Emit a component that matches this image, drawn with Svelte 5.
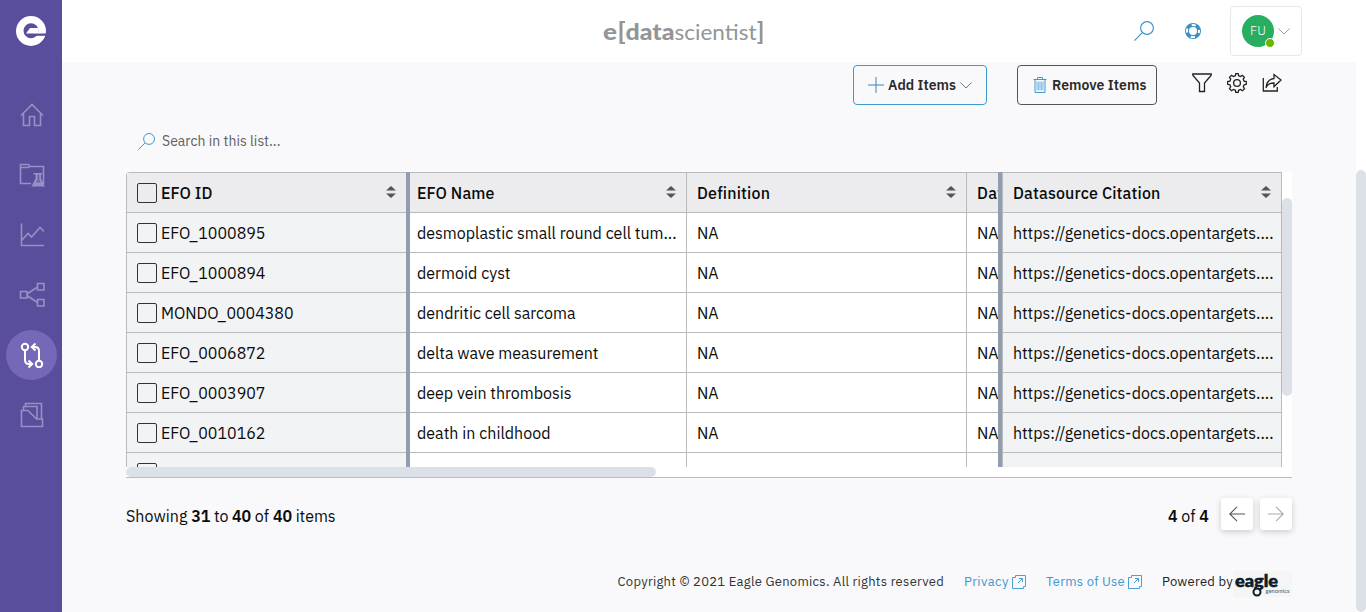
<script>
  const rows = [
    { id: 'EFO_1000895', idW: 104.5, name: 'desmoplastic small round cell tum...', nameW: 259.5 },
    { id: 'EFO_1000894', idW: 104.5, name: 'dermoid cyst', nameW: 93.5 },
    { id: 'MONDO_0004380', idW: 132.5, name: 'dendritic cell sarcoma', nameW: 158.5 },
    { id: 'EFO_0006872', idW: 104.5, name: 'delta wave measurement', nameW: 181.5 },
    { id: 'EFO_0003907', idW: 104.5, name: 'deep vein thrombosis', nameW: 154.5 },
    { id: 'EFO_0010162', idW: 104.5, name: 'death in childhood', nameW: 133.5 },
    { id: '', idW: 0, name: '', nameW: 0 }
  ];

  // Tracks a label out (or in) so that it occupies the given width.
  function fit(node, width) {
    if (!width) return;
    const natural = node.getBoundingClientRect().width;
    node.style.letterSpacing = (width - natural) / node.textContent.length + 'px';
  }
</script>

{#snippet magnifier(size)}
  <svg width={size} height={size} viewBox="0 0 20 20" fill="none" stroke="#3d94cb" stroke-width="1.15">
    <circle cx="13" cy="7" r="6.4" /><path d="M8.4 11.6 0.4 19.6" />
  </svg>
{/snippet}

{#snippet sorter()}
  <svg class="sorter" width="10" height="12" viewBox="0 0 10 12" fill="#555">
    <path d="M0 4.500 5 0l5 4.500zM0 7.500h10L5 12z" />
  </svg>
{/snippet}

{#snippet external()}
  <svg width="14" height="14" viewBox="0 0 14 14" fill="none" stroke="#4b9fd3" stroke-width="1">
    <path d="M3.500 2.500V.5h10v11h-2M3.500 2.500h-3v11h11v-2M6 8l4.500-4.500M7 3.500h3.500V7" />
  </svg>
{/snippet}

<div class="app">
  <nav>
    <div class="brand">
      <svg width="30" height="30" viewBox="0 0 30 30">
        <circle cx="15" cy="15" r="15" fill="#fff" />
        <circle cx="15" cy="14.800" r="7.500" fill="#594e9b" />
        <path d="M12 17.500h18v2.300H12z" fill="#594e9b" />
        <path d="M10 17.500 14 12h8.500v5.500z" fill="#fff" />
      </svg>
    </div>
    <div class="item">
      <svg width="26" height="26" viewBox="0 0 26 26"><path d="M2 13.500 13 2.500l11 11M4.500 11.500v12h6v-9h5v9h6v-12" /></svg>
    </div>
    <div class="item">
      <svg width="26" height="26" viewBox="0 0 26 26"><path d="M12 21.500H1.500v-19h8l1.500 2h13.500V22M1.500 5.500h8L11 4" /><path class="solid" d="M14.500 11h9v1.500H22v4l4 8H12.500l4-8v-4h-2z" /><path d="M19.200 13v4l-1.500 3h3.500l-1.500-3v-4z" stroke="#594e9b" stroke-width=".8" /></svg>
    </div>
    <div class="item">
      <svg width="26" height="26" viewBox="0 0 26 26"><path d="M2.500 1.500v22H25M3 18l6-6.500 3.500 3.500L21 5.500l4 4" /></svg>
    </div>
    <div class="item">
      <svg width="26" height="26" viewBox="0 0 26 26"><path d="M1.500 9.500h6.500v6.500H1.500zM18.500 1.500H25V8h-6.500zM18.500 17.500H25V24h-6.500zM8 12l10.500-7M8 13.500l10.500 7" /></svg>
    </div>
    <div class="item active">
      <svg width="26" height="26" viewBox="0 0 26 26"><circle cx="6" cy="5" r="3.200" /><circle cx="20" cy="22" r="3.200" /><path d="M6 8.200V18q0 4 4 4h3M9.500 18.500l3.700 3.500-3.700 3.500M20 18.800V9q0-4-4-4h-3M16.500 1.500 12.800 5l3.700 3.500" /></svg>
    </div>
    <div class="item">
      <svg width="26" height="26" viewBox="0 0 26 26"><path d="M2.500 24.500v-16h6.500l8.500 8.500h6v7.500zM4.500 8.500v-4h13.500V17M6.500 4.500v-3h16V17" /></svg>
    </div>
  </nav>

  <div class="page">
    <header>
      <svg class="wordmark" width="164" height="30" viewBox="0 0 164 30" fill="#939598">
        <text x="0" y="22.500" font-size="22" font-weight="900" textLength="14" lengthAdjust="spacingAndGlyphs">e</text>
        <path d="M16.500 4h5.500v2h-2.500v19H22v2h-5.500z" />
        <text x="22.500" y="22.500" font-size="22" font-weight="900" textLength="49" lengthAdjust="spacingAndGlyphs">data</text>
        <text x="71.500" y="22.500" font-size="22" font-weight="400" textLength="82" lengthAdjust="spacingAndGlyphs">scientist</text>
        <path d="M159.500 4h-5v2h2.300v19h-2.300v2h5z" />
      </svg>
      <div class="tools">
        {@render magnifier(20)}
        <svg class="help" width="16" height="16" viewBox="0 0 16 16" fill="none">
          <circle cx="8" cy="8" r="6" stroke="#3a8fc4" stroke-width="4" />
          <circle cx="8" cy="8" r="6" stroke="#fff" stroke-width="2" stroke-dasharray="4.200 5.225" stroke-dashoffset="2.100" />
        </svg>
        <div class="account">
          <div class="avatar"><span>FU</span><i></i></div>
          <svg width="12" height="7" viewBox="0 0 12 7" fill="none" stroke="#b99870"><path d="m.4.500 5.600 5.500L11.600.5" /></svg>
        </div>
      </div>
    </header>

    <div class="below">
      <main>
        <div class="actions">
          <button class="add">
            <svg width="16" height="16" viewBox="0 0 16 16" stroke="#3d87b8"><path d="M8 0v16M0 8h16" /></svg>
            <b use:fit={68}>Add Items</b>
            <svg class="chev" width="12" height="7" viewBox="0 0 12 7" fill="none" stroke="#555" stroke-width=".8"><path d="m.4.500 5.600 5.500L11.600.5" /></svg>
          </button>
          <button class="remove">
            <svg width="14" height="16" viewBox="0 0 14 16" fill="none" stroke="#4399cb"><path d="M3 4.500h8v9H3z" fill="#b6d6f5" stroke="none" /><path d="M.5 2.500h13M4.500 2.500v-2h5v2M2 3v12.500h10V3" /><path d="M5.500 5v8M8.500 5v8" stroke="#8fc0e6" /></svg>
            <b use:fit={94.5}>Remove Items</b>
          </button>
          <div class="glyphs">
            <svg width="20" height="20" viewBox="0 0 20 20"><path d="M.8 1h18.400v1.300L12.500 10v8.500h-5V10L.8 2.300z" /></svg>
            <svg width="20" height="20" viewBox="0 0 20 20"><path d="M8.400 2.700 8.800.6h2.400l.4 2.100 2 .8 1.800-1.200 2 2-1.200 1.800.8 2 2.300.5v2.700l-2.200.5-.8 2 1.200 1.900-2 2-1.900-1.200-2 .8-.4 2.100H8.800l-.4-2.100-2-.8-1.900 1.200-2-2 1.200-1.900-.8-2L.6 11.300V8.600l2.300-.5.8-2L2.500 4.300l2-2 1.900 1.200z" /><circle cx="10" cy="10" r="3.400" /></svg>
            <svg width="20" height="20" viewBox="0 0 20 20"><path d="M1.300 5v13h14v-4" /><path d="M4 15c1-3.500 3-5 8-5v3.800L19 7 12 1.600V5.500C7 6 4.500 9 4 15z" /></svg>
          </div>
        </div>

        <div class="search">
          {@render magnifier(17)}
          <span use:fit={118.5}>Search in this list...</span>
        </div>

        <div class="grid">
          <div class="view">
            <div class="col pinned first">
              <div class="cell head"><i class="box"></i><b use:fit={51.5}>EFO ID</b>{@render sorter()}</div>
              {#each rows as r}
                <div class="cell"><i class="box"></i><span use:fit={r.idW}>{r.id}</span></div>
              {/each}
            </div>
            <div class="col">
              <div class="cell head"><b use:fit={77.5}>EFO Name</b>{@render sorter()}</div>
              {#each rows as r}
                <div class="cell"><span use:fit={r.nameW}>{r.name}</span></div>
              {/each}
            </div>
            <div class="col">
              <div class="cell head"><b use:fit={73}>Definition</b>{@render sorter()}</div>
              {#each rows as r}
                <div class="cell"><span>{r.id ? 'NA' : ''}</span></div>
              {/each}
            </div>
            <div class="col cut">
              <div class="cell head"><b class="tracked">Dat</b></div>
              {#each rows as r}
                <div class="cell"><span>{r.id ? 'NA' : ''}</span></div>
              {/each}
            </div>
            <div class="col pinned last">
              <div class="cell head"><b use:fit={147.5}>Datasource Citation</b>{@render sorter()}</div>
              {#each rows as r}
                <div class="cell"><span use:fit={r.id ? 260.5 : 0}>{r.id ? 'https://genetics-docs.opentargets....' : ''}</span></div>
              {/each}
            </div>
            <div class="vtrack"><div></div></div>
          </div>
          <div class="htrack"><div></div></div>
        </div>

        <div class="pager">
          <p class="count"><span use:fit={61.500}>Showing</span><b use:fit={19}>31</b><span use:fit={14.500}>to</span><b use:fit={19}>40</b><span use:fit={14.500}>of</span><b use:fit={19}>40</b><span use:fit={40}>items</span></p>
          <p class="pos"><b>4</b> of <b>4</b></p>
          <button><svg width="16" height="16" viewBox="0 0 16 16" fill="none" stroke="#555" stroke-width="1.100"><path d="M16 8H.8M8 .8.800 8 8 15.200" /></svg></button>
          <button><svg width="16" height="16" viewBox="0 0 16 16" fill="none" stroke="#a9a9a9" stroke-width="1.100"><path d="M0 8h15.200M8 .8 15.200 8 8 15.200" /></svg></button>
        </div>

        <footer>
          <span use:fit={326.500}>Copyright © 2021 Eagle Genomics. All rights reserved</span>
          <a href="#privacy"><span use:fit={45}>Privacy</span>{@render external()}</a>
          <a href="#terms"><span use:fit={79}>Terms of Use</span>{@render external()}</a>
          <div class="powered">
            <span use:fit={71}>Powered by</span>
            <svg width="59" height="26" viewBox="0 0 59 26" fill="#0c1c28">
              <path d="M0 0h59v26H0z" fill="#f5f5f6" />
              <text x="2" y="15.500" font-size="16" font-weight="900" textLength="43" lengthAdjust="spacingAndGlyphs" stroke="#0c1c28" stroke-width=".5">eagle</text>
              <circle cx="24" cy="21" r="3.500" fill="#f5f5f6" stroke="#0c1c28" stroke-width="2" />
              <text x="32.500" y="22" font-size="6" textLength="24" lengthAdjust="spacingAndGlyphs" fill="#4b5962">genomics</text>
            </svg>
          </div>
        </footer>
      </main>
      <div class="scroll"><div></div></div>
    </div>
  </div>
</div>

<style>
  :global(body) { margin: 0; }
  * { box-sizing: border-box; }
  .app { display: flex; width: 1366px; height: 612px; overflow: hidden; background: #f9f9fb; font: 16px/20px "IBM Plex Sans", Roboto, sans-serif; color: #0b0b0b; }
  svg { flex: none; display: block; }
  b { font-weight: 500; }
  span, b { white-space: nowrap; }

  nav { width: 62px; background: #594e9b; display: flex; flex-direction: column; align-items: center; flex: none; }
  .brand { height: 85px; padding-top: 16px; }
  .item { width: 51px; height: 50px; margin-bottom: 10px; display: grid; place-items: center; padding: 0 0 1px 1px; border-radius: 50%; }
  .brand + .item { margin-top: 5px; }
  .item svg { fill: none; stroke: #9790c4; stroke-width: 1.6; }
  .item .solid { fill: #9790c4; stroke: none; }
  .item.active { background: #7569b7; }
  .active svg { stroke: #fff; stroke-width: 2; }

  .page { flex: 1; display: flex; flex-direction: column; }
  header { height: 62px; background: #fff; display: flex; align-items: flex-start; justify-content: space-between; padding: 0 64px 0 541px; }
  .wordmark { margin-top: 17px; font-family: Lato, sans-serif; }
  .tools { display: flex; align-items: center; height: 62px; }
  .help { margin-left: 31px; }
  .account { width: 72px; height: 50px; margin-left: 29px; border: 1px solid #e8e8e8; border-radius: 4px; display: flex; align-items: center; padding-left: 11px; gap: 4px; }
  .avatar { position: relative; width: 32px; height: 32px; border-radius: 50%; background: #27ae60; color: #fff; font-size: 13px; font-weight: 300; display: grid; place-items: center; }
  .avatar i { position: absolute; left: 23px; top: 23px; width: 10px; height: 10px; border-radius: 50%; background: #6bb700; border: 1px solid #fff; }

  .below { flex: 1; display: flex; }
  main { flex: 1; padding: 3px 64px 0; }
  .scroll { width: 10px; background: #fff; padding-top: 108px; }
  .scroll div { height: 442px; border-radius: 5px; background: #dce0e7; }

  .actions { height: 40px; display: flex; justify-content: flex-end; padding-right: 10px; }
  button { font: inherit; color: #222; background: #fff; padding: 0; display: flex; align-items: center; }
  .actions button { height: 40px; border-radius: 4px; background: #f9f9fb; font-size: 14px; }
  .actions b { font-weight: 600; color: #2a2a2a; }
  .add { width: 134px; border: 1px solid #3d9bcf; padding-left: 14px; gap: 4px; }
  .remove { width: 140px; border: 1px solid #555; margin-left: 30px; padding-left: 15px; gap: 5px; }
  .glyphs { display: flex; gap: 15px; margin: 8px 0 0 35px; }
  .glyphs svg { fill: none; stroke: #222; stroke-width: 1.3; }

  .search { height: 67px; padding: 5px 0 0 12px; display: flex; align-items: center; gap: 7px; font-size: 14px; color: #606060; }

  .grid { height: 306px; background: #fff; border-bottom: 1px solid #b9babc; border-top-left-radius: 4px; }
  .view { height: 295px; display: flex; overflow: hidden; }
  .col { width: 280px; flex: none; border-right: 1px solid #b9babc; overflow: hidden; }
  .col.first { width: 284px; border-left: 1px solid #b9babc; border-right: 4px solid #919db1; border-top-left-radius: 4px; }
  .col:nth-child(2) { width: 277px; }
  .col:nth-child(2) .cell { padding-left: 7px; }
  .col.cut { width: 31px; border-right: 0; }
  .col.last { width: 284px; border-left: 4px solid #919db1; }
  .last .cell { border-left: 1px solid #b9babc; }
  .cell { height: 40px; border-bottom: 1px solid #b9babc; padding: 0 10px; display: flex; align-items: center; }
  .pinned .cell { background: #f2f3f5; }
  .cell.head { height: 41px; background: #ececee; border-top: 1px solid #b9babc; }
  .cell :global(.sorter) { margin: -1px 0 0 auto; }
  .box { width: 20px; height: 20px; flex: none; border: 1px solid #333; border-radius: 2px; margin: 1px 4px 0 0; }
  .tracked { letter-spacing: .3px; }
  .vtrack { width: 10px; padding-top: 26px; }
  .vtrack div { height: 198px; border-radius: 5px; background: #dce0e7; }
  .htrack div { width: 530px; height: 10px; border-radius: 5px; background: #dce0e7; }

  .pager { height: 52px; padding-top: 20px; display: flex; align-items: flex-start; }
  p { margin: 0; }
  .count { display: flex; gap: 3.7px; padding-top: 8px; margin-right: auto; }
  .pager b { font-weight: 600; }
  .pos { padding-top: 8px; letter-spacing: .05px; margin-right: 12px; }
  .pager button { width: 32px; height: 32px; justify-content: center; border: 0; border-radius: 3px; box-shadow: 0 2px 6px rgba(0,0,0,.18); }
  .pager button + button { margin-left: 7px; }

  footer { margin-top: 39px; height: 26px; display: flex; align-items: center; justify-content: flex-end; font-size: 13px; color: #333; }
  footer a { color: #4397cd; text-decoration: none; display: flex; align-items: center; gap: 3px; margin-left: 20px; }
  .powered { display: flex; align-items: center; margin-left: 20px; color: #222; }
  .powered svg { font-family: Lato, sans-serif; margin-top: 3px; }
</style>
